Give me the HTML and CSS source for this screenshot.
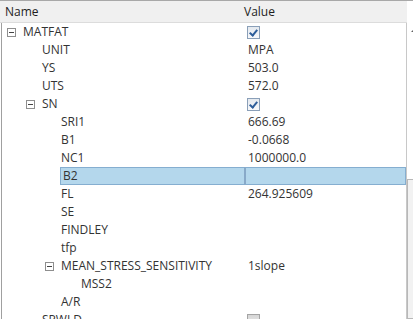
FILE: index.html
```html
<!DOCTYPE html>
<html lang="en">
<head>
  <meta charset="UTF-8">
  <title>Properties</title>
  <link rel="stylesheet" href="styles.css">
</head>
<body>
  <div class="panel">
    <div class="tree">
      <div class="header">
        <div class="col-name">Name</div>
        <div class="col-value">Value</div>
      </div>
      <div class="rows">
        <div class="row"><div class="col-name lvl0"><span class="exp"></span>MATFAT</div><div class="col-value"><span class="check on"></span></div></div>
        <div class="row"><div class="col-name lvl1">UNIT</div><div class="col-value">MPA</div></div>
        <div class="row"><div class="col-name lvl1">YS</div><div class="col-value">503.0</div></div>
        <div class="row"><div class="col-name lvl1">UTS</div><div class="col-value">572.0</div></div>
        <div class="row"><div class="col-name lvl1b"><span class="exp"></span>SN</div><div class="col-value"><span class="check on"></span></div></div>
        <div class="row"><div class="col-name lvl2">SRI1</div><div class="col-value">666.69</div></div>
        <div class="row"><div class="col-name lvl2">B1</div><div class="col-value">-0.0668</div></div>
        <div class="row"><div class="col-name lvl2">NC1</div><div class="col-value">1000000.0</div></div>
        <div class="row selected"><div class="col-name lvl2"><span class="label">B2</span></div><div class="col-value"></div></div>
        <div class="row"><div class="col-name lvl2">FL</div><div class="col-value">264.925609</div></div>
        <div class="row"><div class="col-name lvl2">SE</div><div class="col-value"></div></div>
        <div class="row"><div class="col-name lvl2">FINDLEY</div><div class="col-value"></div></div>
        <div class="row"><div class="col-name lvl2">tfp</div><div class="col-value"></div></div>
        <div class="row"><div class="col-name lvl2b"><span class="exp"></span>MEAN_STRESS_SENSITIVITY</div><div class="col-value">1slope</div></div>
        <div class="row"><div class="col-name lvl3">MSS2</div><div class="col-value"></div></div>
        <div class="row"><div class="col-name lvl2">A/R</div><div class="col-value"></div></div>
        <div class="row"><div class="col-name lvl1">SPWLD</div><div class="col-value"><span class="check off"></span></div></div>
      </div>
    </div>
    <div class="scrollbar">
      <div class="arrow"></div>
      <div class="thumb"></div>
    </div>
  </div>
</body>
</html>
```

FILE: styles.css
```css
* {
  box-sizing: border-box;
}
body {
  margin: 0;
  background-color: #fff;
  font-family: "Open Sans", "Liberation Sans", sans-serif;
  font-size: 12px;
  color: #333;
  overflow: hidden;
}
.panel {
  display: flex;
  width: 430px;
  height: 319px;
}
.tree {
  width: 407px;
  flex-shrink: 0;
}
.header {
  display: flex;
  height: 23px;
  background-color: #f0f0f0;
  border-top: 1px solid #a8a8a8;
  border-bottom: 1px solid #dcdcdc;
  color: #1e1e1e;
  font-size: 12px;
}
.header .col-name {
  padding-left: 5px;
  line-height: 20px;
}
.header .col-value {
  padding-left: 2px;
  line-height: 20px;
}
.rows {
  border-left: 1px solid #a0a0a0;
  margin-left: 1px;
  border-right: 1px solid #c8c8c8;
  height: 296px;
}
.row {
  display: flex;
  height: 18px;
  line-height: 18px;
}
.col-name {
  width: 242px;
  flex-shrink: 0;
  display: flex;
  align-items: center;
  white-space: nowrap;
}
.col-value {
  flex: 1;
  padding-left: 4px;
  display: flex;
  align-items: center;
}
.lvl0 { padding-left: 5px; }
.lvl1 { padding-left: 40px; }
.lvl1b { padding-left: 24px; }
.lvl2 { padding-left: 59px; }
.lvl2b { padding-left: 43px; }
.lvl3 { padding-left: 79px; }
.exp {
  width: 9px;
  height: 9px;
  border: 1px solid #8e8e8e;
  margin-right: 7px;
  position: relative;
}
.exp::after {
  content: "";
  position: absolute;
  left: 1px;
  top: 3px;
  width: 5px;
  height: 1px;
  background-color: #444;
}
.check {
  width: 13px;
  height: 13px;
  border: 1px solid #8a9fb8;
  background: linear-gradient(#e4e9ef, #f7f8fa);
  position: relative;
  margin-left: -1px;
}
.check.on::after {
  content: "";
  position: absolute;
  left: 3px;
  top: 1px;
  width: 3px;
  height: 6px;
  border-right: 2px solid #2d5d9a;
  border-bottom: 2px solid #2d5d9a;
  transform: rotate(40deg);
}
.check.off {
  border-color: #a4a4a4;
  background: linear-gradient(#d6d6d6, #eeeeee);
}
.selected .col-name {
  padding-left: 58px;
}
.selected .label {
  flex: 1;
  height: 18px;
  background-color: #b4d7ec;
  border: 1px solid #85aed0;
  border-right: none;
  padding-left: 2px;
  line-height: 16px;
}
.selected .col-value {
  height: 18px;
  background-color: #b4d7ec;
  border: 1px solid #85aed0;
  border-left: 2px solid #88a9c8;
}
.scrollbar {
  width: 17px;
  padding-top: 23px;
  background-color: #fff;
  border-top: 1px solid #a8a8a8;
  display: flex;
  flex-direction: column;
}
.arrow {
  height: 155px;
  position: relative;
}
.arrow::after {
  content: "";
  position: absolute;
  left: 4px;
  top: 4px;
  border-left: 4px solid transparent;
  border-right: 4px solid transparent;
  border-bottom: 4px solid #606060;
}
.thumb {
  flex: 1;
  border: 1px solid #b8b8b8;
  background-color: #f2f2f2;
}
```
